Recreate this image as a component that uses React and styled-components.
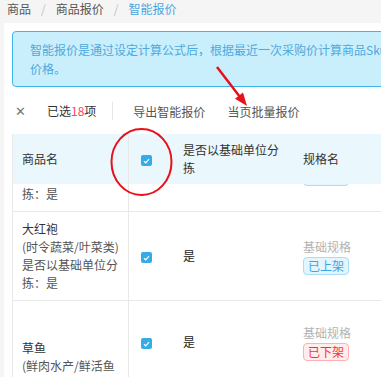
import { useLayoutEffect, useRef } from "react";
import styled, { createGlobalStyle } from "styled-components";

const GlobalStyle = createGlobalStyle`
  html, body {
    margin: 0;
    padding: 0;
    overflow: hidden;
    background: #f5f5f5;
  }
  body {
    font-family: "Noto Sans CJK SC", "Liberation Sans", sans-serif;
    font-size: 12px;
    color: #333;
  }
`;

const rows = [
  {
    id: 1,
    specs: [{ spec: "基础规格", onSale: true }],
    name: "小白菜",
    category: "(时令蔬菜/叶菜类)",
  },
  {
    id: 2,
    specs: [{ spec: "基础规格", onSale: true }],
    name: "大红袍",
    category: "(时令蔬菜/叶菜类)",
  },
  {
    id: 3,
    specs: [
      { spec: "基础规格", onSale: false },
      { spec: "500g", onSale: true },
    ],
    name: "草鱼",
    category: "(鲜肉水产/鲜活鱼类)",
  },
];

const Page = styled.div`
  position: relative;
  width: 381px;
  height: 377px;
  overflow: hidden;
`;

const Breadcrumb = styled.div`
  display: flex;
  align-items: center;
  height: 18px;
  line-height: 18px;
  padding-left: 7px;
  margin-bottom: 5px;
  color: #555;
  white-space: nowrap;
`;

const Crumb = styled.span`
  color: ${(props) => (props.active ? "#4aa6de" : "#555")};
`;

const Slash = styled.span`
  color: #c4c4c4;
  margin: 0 10px;
`;

const Panel = styled.div`
  margin-left: 4px;
  width: 700px;
  background: #fff;
  padding: 8px 0 0 8px;
  height: 400px;
`;

const Alert = styled.div`
  width: 560px;
  border: 1px solid #3db4ea;
  border-radius: 4px;
  background: #c9effd;
  color: #4fa9dc;
  padding: 8px 17px;
  line-height: 19px;
  margin-bottom: 8px;
`;

const Toolbar = styled.div`
  display: flex;
  align-items: center;
  height: 32px;
  margin-bottom: 7px;
  color: #555;
  white-space: nowrap;
`;

const Close = styled.span`
  width: 32px;
  padding-left: 3px;
  color: #777;
  font-size: 13px;
  font-family: "Liberation Sans", sans-serif;
`;

const Count = styled.span`
  color: #333;
  padding-right: 16px;
  border-right: 1px solid #e6e6e6;
  line-height: 18px;
`;

const Red = styled.span`
  color: #ff3b67;
`;

const Action = styled.span`
  margin-left: ${(props) => props.gap}px;
  color: #555;
`;

const Scroller = styled.div`
  height: 260px;
  width: 600px;
  overflow-y: scroll;
  scrollbar-width: none;
  &::-webkit-scrollbar {
    display: none;
  }
`;

const Table = styled.table`
  table-layout: fixed;
  width: 600px;
  border-collapse: separate;
  border-spacing: 0;
  border-left: 1px solid #e8e8e8;
`;

const Th = styled.th`
  position: sticky;
  top: 0;
  background: #eaf7fd;
  font-weight: normal;
  text-align: left;
  color: #333;
  line-height: 18px;
  padding: 7px 8px 7px ${(props) => props.pad}px;
  border-right: ${(props) => (props.divider ? "1px solid #e8e8e8" : "none")};
`;

const Td = styled.td`
  height: ${(props) => props.h || 0}px;
  vertical-align: middle;
  line-height: 18px;
  padding: 8px 6px 8px ${(props) => props.pad}px;
  border-bottom: 1px solid #e8e8e8;
  border-right: ${(props) => (props.divider ? "1px solid #e8e8e8" : "none")};
  color: ${(props) => props.color || "#333"};
`;

const NameLine = styled.div`
  color: ${(props) => (props.main ? "#333" : "#555")};
`;

const Box = styled.span`
  display: inline-flex;
  align-items: center;
  justify-content: center;
  width: 11px;
  height: 11px;
  border-radius: 2px;
  background: #35abe8;
  vertical-align: middle;
`;

const SpecName = styled.div`
  color: #b3b3b3;
`;

const Tag = styled.span`
  display: inline-block;
  margin-top: 1px;
  padding: 0 4px;
  line-height: 16px;
  border-radius: 4px;
  border: 1px solid ${(props) => (props.on ? "#a9dcf6" : "#ffb1b1")};
  background: ${(props) => (props.on ? "#e3f5fe" : "#ffecec")};
  color: ${(props) => (props.on ? "#3ba5e4" : "#f5303a")};
`;

const Overlay = styled.svg`
  position: absolute;
  left: 0;
  top: 0;
  pointer-events: none;
`;

const Checkbox = () => (
  <Box>
    <svg width="7" height="6" viewBox="0 0 7 6">
      <path d="M1 3.2 L2.8 4.8 L6 1.2" fill="none" stroke="#fff" strokeWidth="1.2" />
    </svg>
  </Box>
);

const SpecCell = ({ spec, onSale }) => (
  <Td pad={12}>
    <SpecName>{spec}</SpecName>
    <Tag on={onSale}>{onSale ? "已上架" : "已下架"}</Tag>
  </Td>
);

const App = () => {
  const scrollRef = useRef(null);

  useLayoutEffect(() => {
    // body is scrolled a little: first row sits under the sticky header
    if (scrollRef.current) scrollRef.current.scrollTop = 61;
  }, []);

  return (
    <Page>
      <GlobalStyle />
      <Breadcrumb>
        <Crumb>商品</Crumb>
        <Slash>/</Slash>
        <Crumb>商品报价</Crumb>
        <Slash>/</Slash>
        <Crumb active>智能报价</Crumb>
      </Breadcrumb>
      <Panel>
        <Alert>
          智能报价是通过设定计算公式后，根据最近一次采购价计算商品Sku的报价，可批量修改商品的
          <br />
          价格。
        </Alert>
        <Toolbar>
          <Close>✕</Close>
          <Count>
            已选<Red>18</Red>项
          </Count>
          <Action gap={20}>导出智能报价</Action>
          <Action gap={22}>当页批量报价</Action>
        </Toolbar>
        <Scroller ref={scrollRef}>
          <Table>
            <colgroup>
              <col style={{ width: 116 }} />
              <col style={{ width: 42 }} />
              <col style={{ width: 120 }} />
              <col style={{ width: 130 }} />
              <col />
            </colgroup>
            <thead>
              <tr>
                <Th pad={9} divider>
                  商品名
                </Th>
                <Th pad={12}>
                  <Checkbox />
                </Th>
                <Th pad={12}>是否以基础单位分拣</Th>
                <Th pad={12}>规格名</Th>
                <Th pad={12}>最近采购价</Th>
              </tr>
            </thead>
            <tbody>
              {rows.map((row) =>
                row.specs.map((s, i) => (
                  <tr key={`${row.id}-${i}`}>
                    {i === 0 && (
                      <Td pad={9} divider rowSpan={row.specs.length}>
                        <NameLine main>{row.name}</NameLine>
                        <NameLine>{row.category}</NameLine>
                        <NameLine>是否以基础单位分拣：是</NameLine>
                      </Td>
                    )}
                    <Td pad={12} h={row.specs.length > 1 ? 66 : 0}>
                      <Checkbox />
                    </Td>
                    <Td pad={12} color="#222">
                      是
                    </Td>
                    <SpecCell spec={s.spec} onSale={s.onSale} />
                    <Td pad={12}>-</Td>
                  </tr>
                ))
              )}
            </tbody>
          </Table>
        </Scroller>
      </Panel>
      <Overlay width="381" height="377" viewBox="0 0 381 377">
        <ellipse cx="141.5" cy="162" rx="30" ry="33" fill="none" stroke="#e8111b" strokeWidth="2" />
        <line x1="217" y1="67" x2="240" y2="97" stroke="#e8111b" strokeWidth="2.5" />
        <polygon points="247,106 235,98.8 243,92.6" fill="#e8111b" />
      </Overlay>
    </Page>
  );
};

export default App;
